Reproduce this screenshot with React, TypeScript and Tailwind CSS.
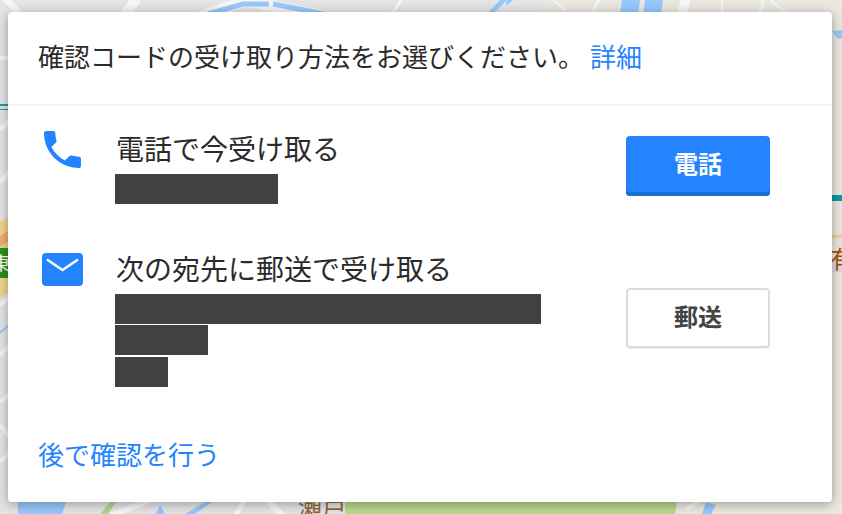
const FONT = "font-['Liberation_Sans','Noto_Sans_CJK_JP',sans-serif]";

function MapBackground() {
  return (
    <svg className="absolute inset-0" width="842" height="514" viewBox="0 0 842 514">
      <defs>
        <linearGradient id="bg" x1="0" x2="1" y1="0" y2="0">
          <stop offset="0.62" stopColor="#e5e5e5" />
          <stop offset="0.68" stopColor="#ebe8df" />
        </linearGradient>
      </defs>
      <rect width="842" height="514" fill="url(#bg)" />
      <g fill="none" stroke="#f6f6f6" strokeLinecap="butt">
        <path d="M5 -2 L20 14" strokeWidth="7" />
        <path d="M137 -2 L124 16" strokeWidth="10" />
        <path d="M403 -2 L390 16" strokeWidth="3" />
        <path d="M553 0 L566 10" strokeWidth="2" />
        <path d="M600 -2 L590 16" strokeWidth="3" />
        <path d="M686 -2 L682 16" strokeWidth="10" />
        <path d="M722 -2 L722 16" strokeWidth="2" />
        <path d="M762 0 C766 6 758 10 757 16" strokeWidth="2" />
        <path d="M770 0 L788 14" strokeWidth="2" />
        <path d="M0 58 L10 58" strokeWidth="4" />
        <path d="M0 130 L12 118" strokeWidth="5" />
        <path d="M0 182 L12 170" strokeWidth="5" />
        <path d="M0 305 L12 296" strokeWidth="4" />
        <path d="M0 355 L12 343" strokeWidth="4" />
        <path d="M0 402 L12 392" strokeWidth="4" />
        <path d="M0 425 L12 440" strokeWidth="4" />
        <path d="M0 462 L12 450" strokeWidth="4" />
        <path d="M196 18 L245 1 L325 16" strokeWidth="11" />
        <path d="M35 500 L50 516" strokeWidth="5" />
        <path d="M110 516 L150 500" strokeWidth="6" />
        <path d="M235 516 L245 500" strokeWidth="5" />
        <path d="M268 500 L282 516" strokeWidth="7" />
        <path d="M677 516 L700 500" strokeWidth="4" />
      </g>
      <path d="M208 14 L243 4 L269 4 M273 4 L325 14" fill="none" stroke="#98c9fd" strokeWidth="5" />
      <g fill="#98c9fd">
        <path d="M487 14 L500 0 L507 0 L493 14 Z" />
        <path d="M506 6 L513 0 L507 0 Z" />
        <path d="M622 0 H640 L638 14 H620 Z" />
        <path d="M645 0 H663 L661 14 H643 Z" />
        <path d="M18 502 H66 L62 514 H18 Z" />
        <path d="M160 505 L165 514 H156 Z" />
        <path d="M185 514 L205 502 H212 L195 514 Z" />
        <path d="M706 502 L716 505 L711 514 H702 Z" />
        <path d="M832 31 L842 30 V38 L838 39 Z" />
        <path d="M0 331 L12 322 V324 L0 334 Z" />
      </g>
      <path d="M100 514 L110 502 H116 L108 514 Z" fill="#b5d68c" />
      <rect x="345" y="500" width="332" height="14" fill="#b9d98f" />
      <path d="M677 500 L692 514 H675 Z" fill="#ebe8df" />
      <rect x="0" y="104" width="10" height="2" fill="#1aa0a8" />
      <rect x="0" y="109" width="10" height="1" fill="#1aa0a8" />
      <rect x="832" y="195" width="10" height="6" fill="#0f97a3" />
      <rect x="832" y="235" width="10" height="3" fill="#efd28c" />
      <rect x="832" y="258" width="10" height="14" fill="#dcdcdc" />
      <path d="M0 222 L12 214 V248 H0 Z" fill="#f0d68f" />
      <path d="M0 236 L12 228 V240 L0 246 Z" fill="#eeb069" />
      <path d="M0 278 H12 V290 L0 298 Z" fill="#f0d68f" />
      <rect x="0" y="248" width="12" height="30" fill="#2f8f1d" />
      <text x="-8" y="270" fontSize="18" fill="#ffffff" fontFamily="'Noto Sans CJK JP', sans-serif">東</text>
      <text x="830" y="268" fontSize="24" fill="#a0520f" fontFamily="'Noto Sans CJK JP', sans-serif">有</text>
      <text x="298" y="516" fontSize="24" fill="#8d6a3e" fontFamily="'Noto Sans CJK JP', sans-serif">瀬戸</text>
    </svg>
  );
}

function PhoneIcon() {
  return (
    <svg width="37" height="37" viewBox="3 3 18 18" className="ml-[6px] -mt-[3px]">
      <path
        fill="#2484ff"
        d="M6.62 10.79c1.44 2.83 3.76 5.14 6.59 6.59l2.2-2.2c.27-.27.67-.36 1.02-.24 1.12.37 2.33.57 3.57.57.55 0 1 .45 1 1V20c0 .55-.45 1-1 1-9.39 0-17-7.61-17-17 0-.55.45-1 1-1h3.5c.55 0 1 .45 1 1 0 1.25.2 2.45.57 3.57.11.35.03.74-.25 1.02l-2.2 2.2z"
      />
    </svg>
  );
}

function MailIcon() {
  return (
    <svg width="41" height="33" viewBox="0 0 41 33" className="ml-[4px] -mt-[1px]">
      <rect width="41" height="33" rx="4" fill="#2484ff" />
      <path d="M5 6.5 L20.5 17 L36 6.5" fill="none" stroke="#ffffff" strokeWidth="2.6" />
    </svg>
  );
}

function Bar({ width }: { width: string }) {
  return <div className={`h-[30px] bg-[#414141] ${width}`} />;
}

export default function App() {
  return (
    <div className={`relative w-[842px] h-[514px] overflow-hidden pl-2 pt-3 ${FONT}`}>
      <MapBackground />
      <div className="relative w-[824px] h-[490px] bg-white rounded-[4px] shadow-[0_2px_12px_rgba(0,0,0,0.35)] flex flex-col">
        <div className="h-[94px] border-b-2 border-[#f3f3f3] pl-[30px] flex items-center text-[26px] leading-[30px] text-[#2b2b2b] whitespace-nowrap">
          <span>確認コードの受け取り方法をお選びください。</span>
          <span className="text-[#2484ff] ml-[6px]">詳細</span>
        </div>
        <div className="pl-[30px] pr-[62px] pt-[28px] flex flex-col gap-[50px]">
          <div className="flex items-start">
            <div className="w-[77px] shrink-0">
              <PhoneIcon />
            </div>
            <div className="flex-1">
              <div className="text-[28px] leading-[30px] text-[#2b2b2b] pt-[2px] mb-[8px] h-[32px] ml-px">電話で今受け取る</div>
              <Bar width="w-[163px]" />
            </div>
            <button className="w-[144px] h-[60px] mt-[2px] rounded-[4px] bg-[#2484ff] shadow-[inset_0_-4px_0_#1a6fd0] text-white text-[24px] font-bold pb-[2px]">
              電話
            </button>
          </div>
          <div className="flex items-start">
            <div className="w-[77px] shrink-0">
              <MailIcon />
            </div>
            <div className="flex-1">
              <div className="text-[28px] leading-[30px] text-[#2b2b2b] pt-[2px] mb-[8px] h-[32px] ml-px">次の宛先に郵送で受け取る</div>
              <div className="flex flex-col">
                <Bar width="w-[426px]" />
                <div className="mt-px"><Bar width="w-[93px]" /></div>
                <div className="mt-[2px]"><Bar width="w-[53px]" /></div>
              </div>
            </div>
            <button className="w-[144px] h-[60px] mt-[34px] rounded-[4px] bg-white border-2 border-[#dcdcdc] shadow-[0_1px_1px_rgba(0,0,0,0.06)] text-[#444444] text-[24px] font-bold">
              郵送
            </button>
          </div>
        </div>
        <div className="pl-[30px] mt-[54px] text-[26px] leading-[30px] text-[#2484ff]">後で確認を行う</div>
      </div>
    </div>
  );
}
